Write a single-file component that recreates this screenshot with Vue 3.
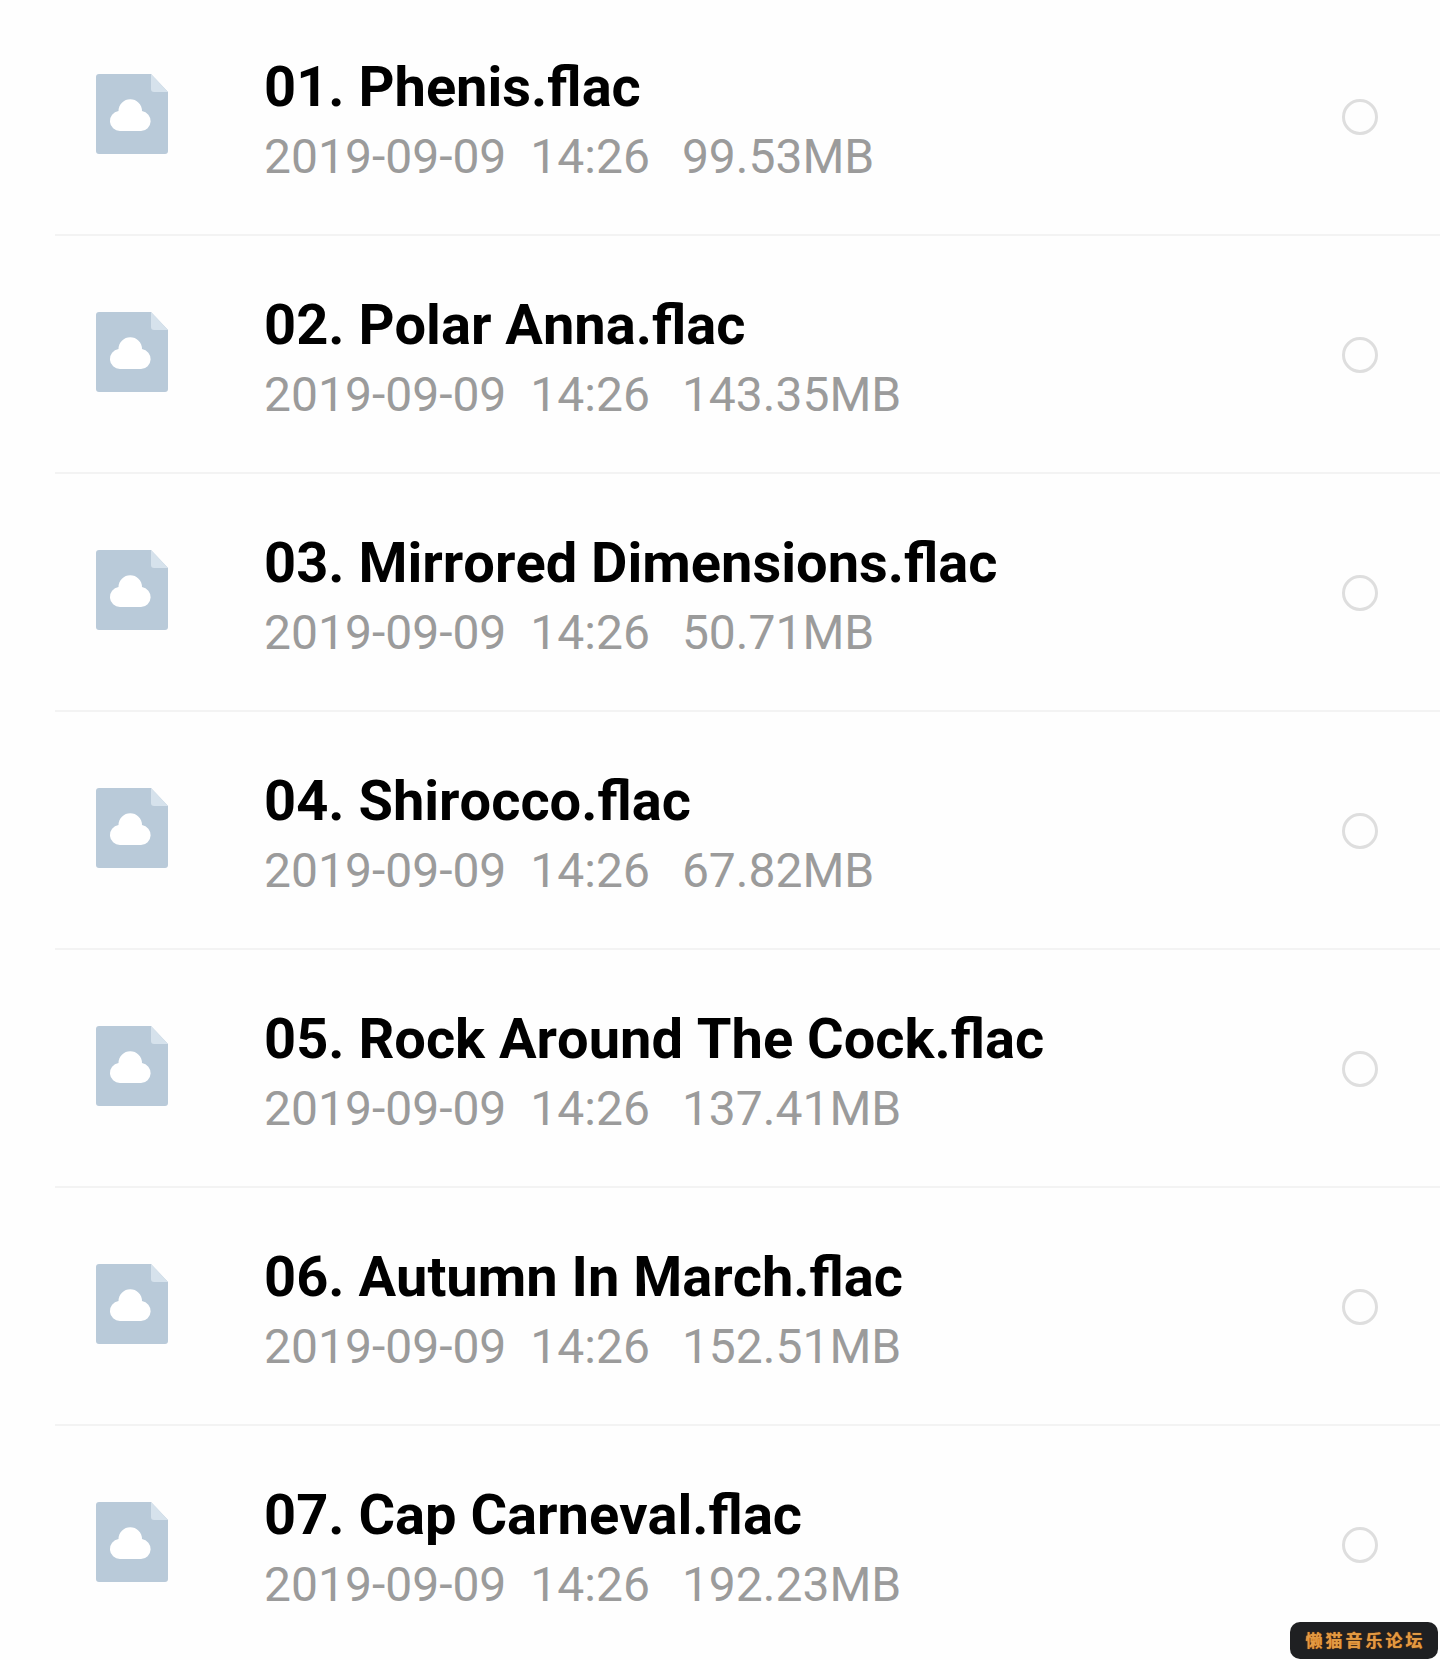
<script setup>
const files = [
  { name: '01. Phenis.flac', size: '99.53MB' },
  { name: '02. Polar Anna.flac', size: '143.35MB' },
  { name: '03. Mirrored Dimensions.flac', size: '50.71MB' },
  { name: '04. Shirocco.flac', size: '67.82MB' },
  { name: '05. Rock Around The Cock.flac', size: '137.41MB' },
  { name: '06. Autumn In March.flac', size: '152.51MB' },
  { name: '07. Cap Carneval.flac', size: '192.23MB' },
]
</script>

<template>
  <div class="page">
    <ul class="list">
      <li v-for="f in files" :key="f.name" class="row">
        <svg class="file" viewBox="0 0 72 80" width="72" height="80">
          <path d="M3 0H55L72 18V77a3 3 0 0 1-3 3H3a3 3 0 0 1-3-3V3a3 3 0 0 1 3-3Z" fill="#b9cad9" />
          <path d="M55 0L72 18H58a3 3 0 0 1-3-3Z" fill="#d6e2ec" />
          <path d="M24 57a10 10 0 0 1-1.500-19.900 11.500 11.500 0 0 1 23.500 0 10 10 0 0 1-1 19.900Z" fill="#fff" />
        </svg>
        <div class="text">
          <div class="name">{{ f.name }}</div>
          <div class="meta">
            <span class="date">2019-09-09</span>
            <span class="time">14:26</span>
            <span>{{ f.size }}</span>
          </div>
        </div>
        <span class="radio"></span>
      </li>
    </ul>
    <div class="badge">懒猫音乐论坛</div>
  </div>
</template>

<style scoped>
.page {
  position: relative;
  width: 1440px;
  height: 1660px;
  overflow: hidden;
  background: #fefefe;
  font-family: Roboto, "Noto Sans CJK SC", sans-serif;
}
.list {
  list-style: none;
  margin: -2px 0 0;
  padding: 0 0 0 55px;
}
.row {
  display: flex;
  align-items: center;
  height: 238px;
  box-sizing: border-box;
  border-bottom: 2px solid #f3f3f3;
  padding: 0 62px 0 41px;
}
.file {
  flex: none;
  margin: 0 96px 4px 0;
}
.text {
  flex: 1;
  min-width: 0;
  padding-top: 12px;
}
.name {
  font-size: 56px;
  line-height: 70px;
  font-weight: 700;
  color: #000;
  white-space: nowrap;
  font-kerning: none;
}
.meta {
  display: flex;
  font-size: 48px;
  line-height: 70px;
  color: #9b9b9b;
  white-space: pre;
}
.date { margin-right: 24px; }
.time { margin-right: 32px; }
.radio {
  flex: none;
  width: 36px;
  height: 36px;
  box-sizing: border-box;
  border: 3px solid #dedede;
  border-radius: 50%;
  margin-top: 2px;
}
.badge {
  position: absolute;
  right: 2px;
  bottom: 1px;
  width: 148px;
  height: 37px;
  box-sizing: border-box;
  display: flex;
  align-items: center;
  justify-content: center;
  background: #1f2022;
  border-radius: 10px;
  color: #e09a45;
  text-shadow: 0 0 1px #ff7a00;
  font-family: "Noto Sans CJK SC", sans-serif;
  font-weight: 700;
  font-size: 17px;
  letter-spacing: 3px;
  padding: 0 0 2px 3px;
}
</style>
